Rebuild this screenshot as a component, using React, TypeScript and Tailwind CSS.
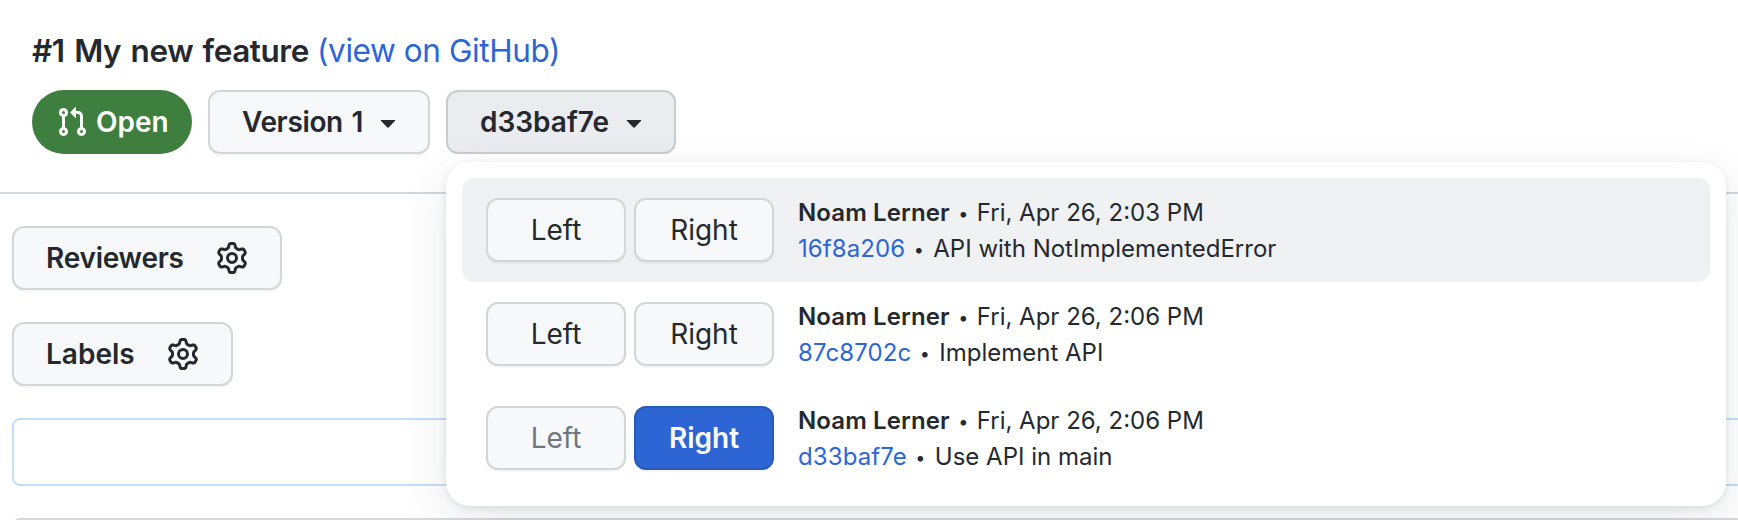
import React from "react";

const GEAR =
  "M8 0a8.2 8.2 0 0 1 .701.031C9.444.095 9.99.645 10.16 1.29l.288 1.107c.018.066.079.158.212.224.231.114.454.243.668.386.123.082.233.09.299.071l1.103-.303c.644-.176 1.392.021 1.82.63.27.385.506.792.704 1.218.315.675.111 1.422-.364 1.891l-.814.806c-.049.048-.098.147-.088.294.016.257.016.515 0 .772-.01.147.038.246.088.294l.814.806c.475.469.679 1.216.364 1.891a7.977 7.977 0 0 1-.704 1.217c-.428.61-1.176.807-1.82.63l-1.102-.302c-.067-.019-.177-.011-.3.071a5.909 5.909 0 0 1-.668.386c-.133.066-.194.158-.211.224l-.29 1.106c-.168.646-.715 1.196-1.458 1.26a8.006 8.006 0 0 1-1.402 0c-.743-.064-1.289-.614-1.458-1.26l-.289-1.106c-.018-.066-.079-.158-.212-.224a5.738 5.738 0 0 1-.668-.386c-.123-.082-.233-.09-.299-.071l-1.103.303c-.644.176-1.392-.021-1.82-.63a8.12 8.12 0 0 1-.704-1.218c-.315-.675-.111-1.422.363-1.891l.815-.806c.05-.048.098-.147.088-.294a6.214 6.214 0 0 1 0-.772c.01-.147-.038-.246-.088-.294l-.815-.806C.635 6.045.431 5.298.746 4.623a7.92 7.92 0 0 1 .704-1.217c.428-.61 1.176-.807 1.82-.63l1.102.302c.067.019.177.011.3-.071.214-.143.437-.272.668-.386.133-.066.194-.158.211-.224l.29-1.106C6.009.645 6.556.095 7.299.03 7.53.01 7.764 0 8 0Zm-.571 1.525c-.036.003-.108.036-.137.146l-.289 1.105c-.147.561-.549.967-.998 1.189-.173.086-.34.183-.5.29-.417.278-.97.423-1.529.27l-1.103-.303c-.109-.03-.175.016-.195.045-.22.312-.412.644-.573.99-.014.031-.021.11.059.19l.815.806c.411.406.562.957.53 1.456a4.709 4.709 0 0 0 0 .582c.032.499-.119 1.05-.53 1.456l-.815.806c-.081.08-.073.159-.059.19.162.346.353.677.573.989.02.03.085.076.195.046l1.102-.303c.56-.153 1.113-.008 1.53.27.161.107.328.204.501.29.447.222.85.629.997 1.189l.289 1.105c.029.109.101.143.137.146a6.6 6.6 0 0 0 1.142 0c.036-.003.108-.036.137-.146l.289-1.105c.147-.561.549-.967.998-1.189.173-.086.34-.183.5-.29.417-.278.97-.423 1.529-.27l1.103.303c.109.029.175-.016.195-.045.22-.313.411-.644.573-.99.014-.031.021-.11-.059-.19l-.815-.806c-.411-.406-.562-.957-.53-1.456a4.709 4.709 0 0 0 0-.582c-.032-.499.119-1.05.53-1.456l.815-.806c.081-.08.073-.159.059-.19a6.464 6.464 0 0 0-.573-.989c-.02-.03-.085-.076-.195-.046l-1.102.303c-.56.153-1.113.008-1.53-.27a4.44 4.44 0 0 0-.501-.29c-.447-.222-.85-.629-.997-1.189l-.289-1.105c-.029-.11-.101-.143-.137-.146a6.6 6.6 0 0 0-1.142 0ZM11 8a3 3 0 1 1-6 0 3 3 0 0 1 6 0ZM9.5 8a1.5 1.5 0 1 0-3.001.001A1.5 1.5 0 0 0 9.5 8Z";
const PULL_REQUEST =
  "M1.5 3.25a2.25 2.25 0 1 1 3 2.122v5.256a2.251 2.251 0 1 1-1.5 0V5.372A2.25 2.25 0 0 1 1.5 3.25Zm5.677-.177L9.573.677A.25.25 0 0 1 10 .854V2.5h1A2.5 2.5 0 0 1 13.5 5v5.628a2.251 2.251 0 1 1-1.5 0V5a1 1 0 0 0-1-1h-1v1.646a.25.25 0 0 1-.427.177L7.177 3.427a.25.25 0 0 1 0-.354ZM3.75 2.5a.75.75 0 1 0 0 1.5.75.75 0 0 0 0-1.5Zm0 9.5a.75.75 0 1 0 0 1.5.75.75 0 0 0 0-1.5Zm8.25.75a.75.75 0 1 0 1.5 0 .75.75 0 0 0-1.5 0Z";
const TRIANGLE =
  "m4.427 7.427 3.396 3.396a.25.25 0 0 0 .354 0l3.396-3.396A.25.25 0 0 0 11.396 7H4.604a.25.25 0 0 0-.177.427Z";

function Icon({ d }: { d: string }) {
  return (
    <svg className="size-8 shrink-0" viewBox="0 0 16 16" fill="currentColor" aria-hidden="true">
      <path d={d} />
    </svg>
  );
}

const BUTTON =
  "flex h-16 shrink-0 items-center rounded-xl border-2 border-[#d3d6d9] bg-[#f6f8fa] text-[28px] shadow-[0_2px_0_rgba(31,35,40,0.04)]";

type Commit = { sha: string; time: string; message: string; current?: boolean; hovered?: boolean };

const commits: Commit[] = [
  { sha: "16f8a206", time: "Fri, Apr 26, 2:03 PM", message: "API with NotImplementedError", hovered: true },
  { sha: "87c8702c", time: "Fri, Apr 26, 2:06 PM", message: "Implement API" },
  { sha: "d33baf7e", time: "Fri, Apr 26, 2:06 PM", message: "Use API in main", current: true },
];

function Bullet() {
  return <span className="h-9 w-[27px] text-center text-[18px] leading-[37px]">•</span>;
}

function CommitRow({ commit }: { commit: Commit }) {
  return (
    <div className={`flex h-[104px] items-center rounded-xl pl-6 ${commit.hovered ? "bg-[#eff1f3]" : ""}`}>
      <div className="flex gap-2">
        <button className={`${BUTTON} w-[140px] justify-center ${commit.current ? "text-[#6e7781]" : ""}`}>
          Left
        </button>
        {commit.current ? (
          <button className="flex h-16 w-[140px] items-center justify-center rounded-xl border-2 border-[#285ab9] bg-[#2d66d4] text-[28px] font-semibold text-white shadow-[0_2px_0_rgba(31,35,40,0.04)]">
            Right
          </button>
        ) : (
          <button className={`${BUTTON} w-[140px] justify-center`}>Right</button>
        )}
      </div>
      <div className="ml-6 flex flex-col pt-0.5 text-2xl leading-9 whitespace-pre">
        <div className="flex">
          <span className="font-semibold tracking-[0.12px]">Noam Lerner</span>
          <Bullet />
          <span>{commit.time}</span>
        </div>
        <div className="flex">
          <span className="tracking-[0.1px] text-[#2d66d4]">{commit.sha}</span>
          <Bullet />
          <span className="pl-px">{commit.message}</span>
        </div>
      </div>
    </div>
  );
}

export default function App() {
  return (
    <div className="relative flex h-[520px] w-[1738px] flex-col overflow-hidden bg-white font-['Inter','Liberation_Sans',sans-serif] text-[#25292e]">
      <header className="flex h-[194px] shrink-0 flex-col border-b-2 border-[#d0d7de] pl-8 pt-[27px]">
        <h1 className="flex h-12 items-center text-[31.5px] whitespace-pre">
          <span className="w-[285px] font-semibold tracking-[-0.45px] [word-spacing:2px]">#1 My new feature</span>
          <a className="tracking-[-0.4px] text-[#2d66d4]">(view on GitHub)</a>
        </h1>
        <div className="mt-[15px] flex gap-4">
          <div className="flex h-16 w-40 items-center gap-2 rounded-full bg-[#3e7e3f] pl-6 text-[28px] font-semibold text-white">
            <Icon d={PULL_REQUEST} />
            <span>Open</span>
          </div>
          <button className={`${BUTTON} w-[222px] pl-8 font-semibold`}>
            <span className="w-[130px] text-left tracking-[-0.35px] whitespace-nowrap [word-spacing:2px]">Version 1</span>
            <Icon d={TRIANGLE} />
          </button>
          <button className="flex h-16 w-[230px] items-center rounded-xl border-2 border-[#c9cbcf] bg-[#ebecf0] pl-8 text-[28px] font-semibold">
            <span className="w-[138px] text-left whitespace-nowrap">d33baf7e</span>
            <Icon d={TRIANGLE} />
          </button>
        </div>
      </header>

      <main className="flex flex-col items-start gap-8 pl-3 pt-8">
        <button className={`${BUTTON} w-[270px] pl-8 font-semibold`}>
          <span className="w-[170px] text-left tracking-[-0.25px]">Reviewers</span>
          <Icon d={GEAR} />
        </button>
        <button className={`${BUTTON} w-[221px] pl-8 font-semibold`}>
          <span className="w-[121px] text-left">Labels</span>
          <Icon d={GEAR} />
        </button>
        <div className="h-[68px] w-[1760px] rounded-lg border-2 border-[#c2dcfb]" />
        <div className="h-16 w-[1760px] rounded-lg border-2 border-[#d5dade]" />
      </main>

      <div className="absolute top-[162px] left-[446px] flex h-[344px] w-[1280px] flex-col rounded-3xl bg-white p-4 shadow-[0_2px_6px_rgba(66,74,83,0.12),0_16px_48px_rgba(66,74,83,0.12)]">
        {commits.map((commit) => (
          <CommitRow key={commit.sha} commit={commit} />
        ))}
      </div>
    </div>
  );
}
